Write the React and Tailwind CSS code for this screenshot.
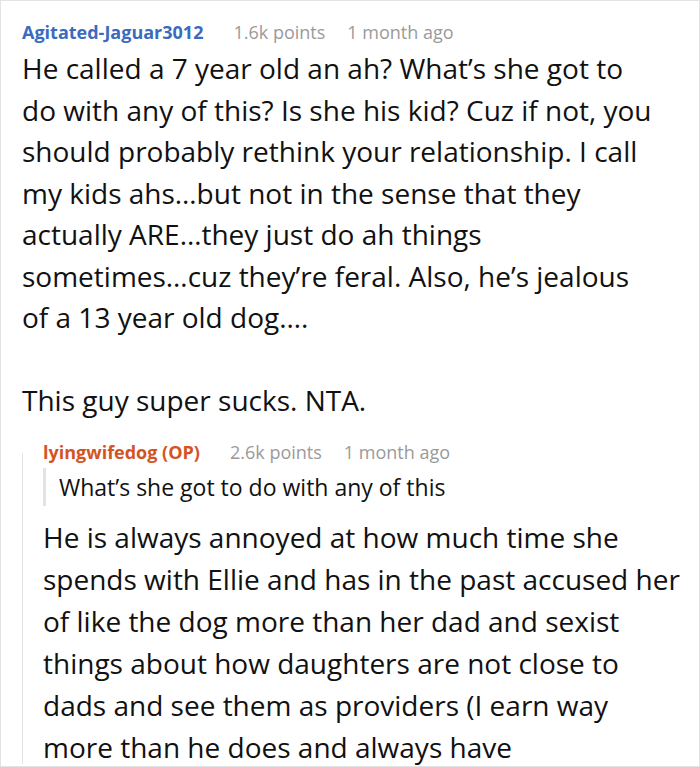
export default function App() {
  const font = { fontFamily: '"Open Sans", "Noto Sans", sans-serif' };

  return (
    <div className="w-[700px] h-[767px] bg-white overflow-hidden" style={font}>
      <div className="w-[700px] h-[767px] border border-[#e3e3e3] pl-[21px] pr-[19px] pt-[18px] overflow-hidden">
        <div className="flex items-baseline text-[18px] leading-[26px]">
          <span className="font-bold text-[#3b6bc0]">Agitated-Jaguar3012</span>
          <span className="ml-[30px] text-[#9a9a9a]">1.6k points</span>
          <span className="ml-[22px] text-[#9a9a9a]">1 month ago</span>
        </div>

        <div className="mt-[3px] mr-[18px] text-[28px] leading-[41.5px] text-[#111]">
          <p>
            {"He called a 7 year old an ah? What’s she got to do with any of this? Is she his kid? Cuz if not, you should probably rethink your relationship. I call my kids ahs…\u2060but not in the sense that they actually ARE…\u2060they just do ah things sometimes…\u2060cuz they’re feral. Also, he’s jealous of a 13 year old dog…."}
          </p>
          <p className="mt-[41.5px]">This guy super sucks. NTA.</p>
        </div>

        <div className="mt-[17px] flex">
          <div className="w-px bg-[#e3e3e3] mt-[14px] mb-[4px]" />
          <div className="pl-[20px] flex-1">
            <div className="flex items-baseline text-[18px] leading-[26px]">
              <span className="font-bold text-[#d4541f]">lyingwifedog (OP)</span>
              <span className="ml-[30px] text-[#9a9a9a]">2.6k points</span>
              <span className="ml-[22px] text-[#9a9a9a]">1 month ago</span>
            </div>
            <div className="mt-[3px] border-l-[3px] border-[#e3e3e3] pl-[13px] text-[23px] leading-[38px] text-[#111]">
              What’s she got to do with any of this
            </div>
            <p className="mt-[10px] text-[28px] leading-[42px] text-[#111]">
              He is always annoyed at how much time she spends with Ellie and has in the past accused her of like
              the dog more than her dad and sexist things about how daughters are not close to dads and see them as
              providers (I earn way more than he does and always have
            </p>
          </div>
        </div>
      </div>
    </div>
  );
}
